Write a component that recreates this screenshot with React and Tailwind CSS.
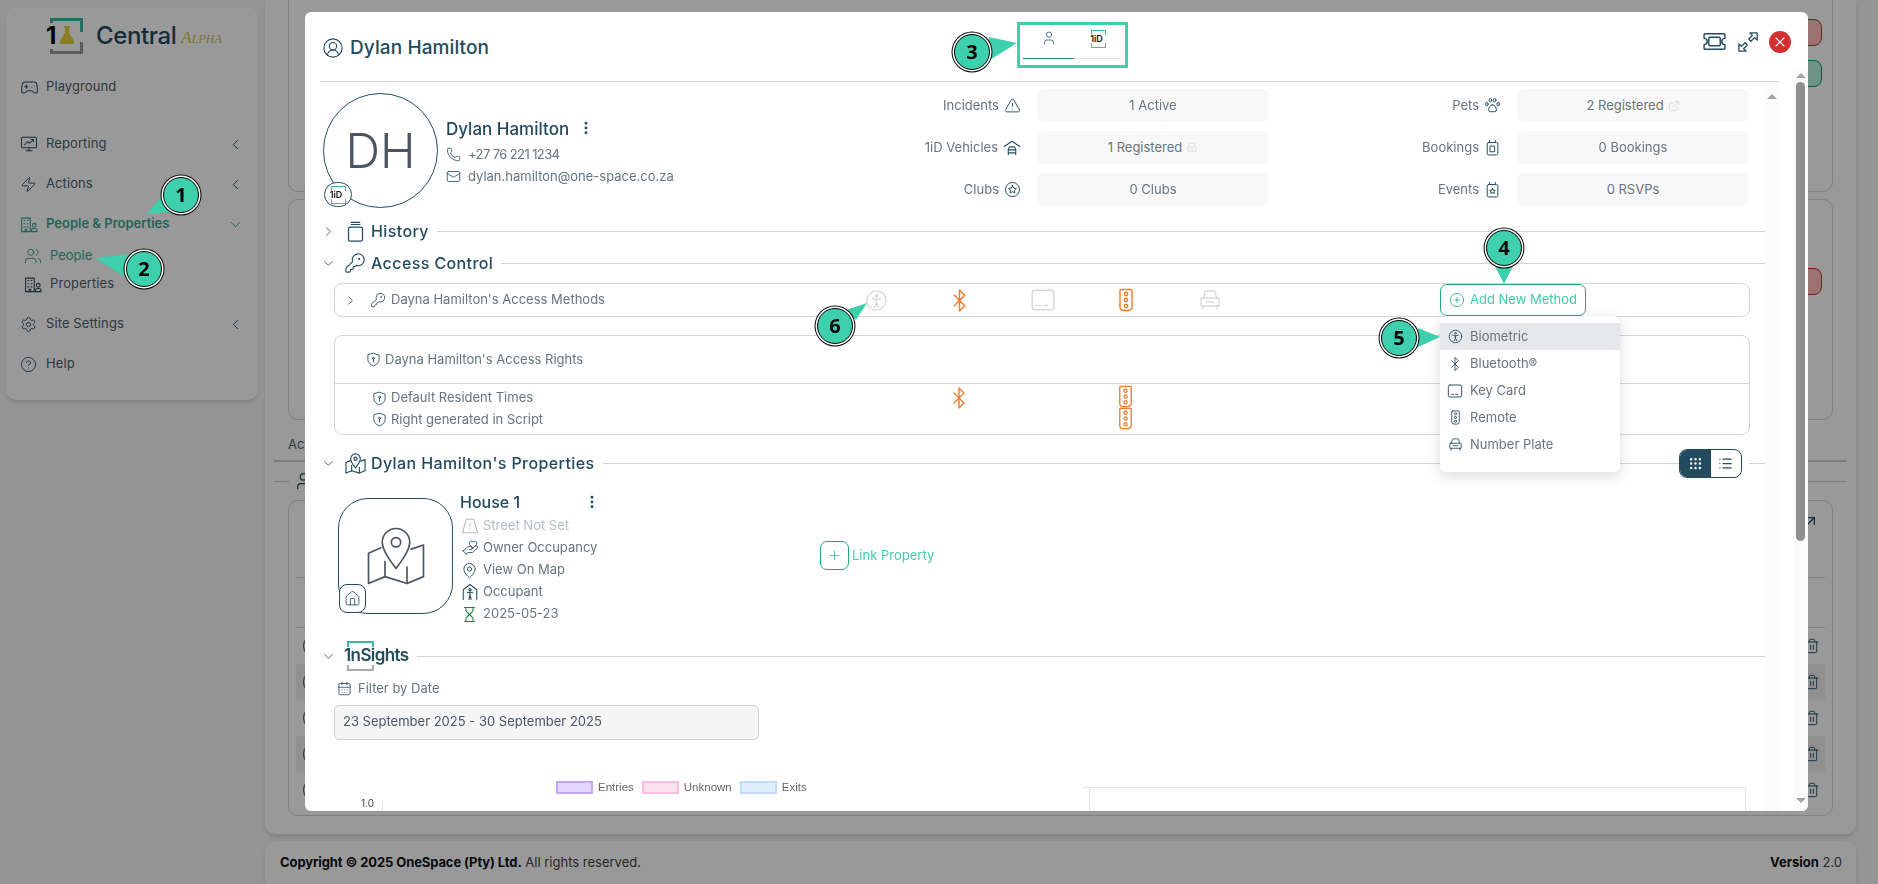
import React from "react";
import {
  Gamepad2, Zap, Users, Settings, CircleHelp, ChevronLeft, ChevronDown, ChevronRight,
  CircleUserRound, User, Phone, Mail, TriangleAlert, ExternalLink,
  KeyRound, Bluetooth, CirclePlus, Plus, MapPin, House, Hourglass, HandHeart,
  CalendarDays, EllipsisVertical, X, Trash2, ArrowUpRight, List, Grip,
} from "lucide-react";

const navy = "text-[#234b5e]";

// little drawn icons the packages don't have
const Svg = ({ size = 18, sw = 1.4, className = "", children }) => (
  <svg width={size} height={size} viewBox="0 0 24 24" fill="none" stroke="currentColor" strokeWidth={sw} strokeLinecap="round" strokeLinejoin="round" className={`shrink-0 ${className}`}>
    {children}
  </svg>
);

const BuildingUser = ({ size, className }) => (
  <Svg size={size} className={className}>
    <path d="M2 21V4h11v17H2z" />
    <path d="M5 7h1M9 7h1M5 11h1M9 11h1M5 15h1M9 15h1M6.500 21v-3h2v3" />
    <circle cx="18" cy="13" r="2.400" />
    <path d="M14.500 21v-1.500a2.500 2.500 0 0 1 2.500-2.500h2a2.500 2.500 0 0 1 2.500 2.500V21z" />
  </Svg>
);
const ChartMonitor = ({ size, className }) => (
  <Svg size={size} className={className}>
    <rect x="2" y="3" width="20" height="14" rx="1.500" />
    <path d="M6 13l4-4 3 2 5-5M15 6h3v3M12 17v4M8 21h8" />
  </Svg>
);
const BioIcon = ({ size, className }) => (
  <Svg size={size} className={className}>
    <circle cx="12" cy="12" r="10" />
    <circle cx="12" cy="7" r="1.300" />
    <path d="M7.500 10l4.500 1 4.500-1M12 11v3.500M12 14.500L10 19M12 14.500l2 4.500" />
  </Svg>
);
const KeyCard = ({ size, className }) => (
  <Svg size={size} className={className}>
    <rect x="2" y="3" width="20" height="18" rx="2.500" />
    <path d="M7 17h3M13 17h3" />
  </Svg>
);
const Remote = ({ size, className }) => (
  <Svg size={size} className={className}>
    <path d="M7 1.500h10a1 1 0 0 1 1 1V19a3.500 3.500 0 0 1-3.500 3.500h-5A3.500 3.500 0 0 1 6 19V2.500a1 1 0 0 1 1-1z" />
    <circle cx="12" cy="6" r="1.700" />
    <circle cx="12" cy="12" r="1.700" />
    <circle cx="12" cy="18" r="1.700" />
  </Svg>
);
const CarIcon = ({ size, sw, className }) => (
  <Svg size={size} sw={sw} className={className}>
    <path d="M5.500 10l1.500-6a1.500 1.500 0 0 1 1.500-1h7a1.500 1.500 0 0 1 1.500 1l1.500 6" />
    <path d="M4 10h16a1 1 0 0 1 1 1v7H3v-7a1 1 0 0 1 1-1z" />
    <path d="M5 18v3M19 18v3M8 14h8" />
  </Svg>
);
const ShieldKey = ({ size = 15, className }) => (
  <Svg size={size} className={className}>
    <path d="M12 2l9 3v7c0 5-4 8.500-9 10-5-1.500-9-5-9-10V5z" />
    <circle cx="12" cy="10" r="1.600" />
    <path d="M12 11.500V16" />
  </Svg>
);
const GarageCar = ({ size, className }) => (
  <Svg size={size} className={className}>
    <path d="M1.500 10L12 3l10.500 7" />
    <path d="M7 21v-7l1.500-3.500h7L17 14v7M7 14.500h10M7 18.500h10" />
  </Svg>
);
const StarCircle = ({ size, className }) => (
  <Svg size={size} className={className}>
    <circle cx="12" cy="12" r="10" />
    <path d="M12 6.500l1.700 3.500 3.800.5-2.800 2.600.7 3.800-3.400-1.800-3.400 1.800.7-3.800-2.800-2.600 3.800-.5z" />
  </Svg>
);
const Jar = ({ size, className, star }) => (
  <Svg size={size} className={className}>
    <rect x="4.500" y="5" width="15" height="17.500" rx="2" />
    <path d="M8 2v3M16 2v3" />
    {star ? <path d="M12 10.500l1.200 2.400 2.600.4-1.900 1.800.5 2.600-2.400-1.300-2.400 1.300.5-2.600-1.900-1.800 2.600-.4z" /> : <rect x="9" y="10" width="6" height="8" />}
  </Svg>
);
const HistoryIcon = ({ size, className }) => (
  <Svg size={size} className={className}>
    <rect x="4" y="7" width="16" height="16" rx="2" />
    <path d="M7 4h10M7 1.500h10" />
  </Svg>
);
const Ticket = ({ size, className }) => (
  <Svg size={size} className={className}>
    <path d="M3 4.500h18a1 1 0 0 1 1 1V9a3 3 0 0 0 0 6v3.500a1 1 0 0 1-1 1H3a1 1 0 0 1-1-1V15a3 3 0 0 0 0-6V5.500a1 1 0 0 1 1-1z" />
    <rect x="6.500" y="8" width="11" height="8" rx="1" />
  </Svg>
);
const ExpandArrows = ({ size, className }) => (
  <Svg size={size} className={className}>
    <path d="M14 2h8v8l-2.800-2.800-4 4-2.400-2.400 4-4z" />
    <path d="M10 22H2v-8l2.800 2.800 4-4 2.400 2.400-4 4z" />
  </Svg>
);
const Street = ({ size, className }) => (
  <Svg size={size} className={className}>
    <path d="M7 3h10l5 18H2z" />
    <path d="M12 8v4M12 16v.5" />
  </Svg>
);
const Occupant = ({ size, className }) => (
  <Svg size={size} className={className}>
    <path d="M3 22V9l9-7 9 7v13" />
    <circle cx="12" cy="9" r="1.500" />
    <path d="M8.500 13l3.500-1 3.500 1M12 12v4M12 16l-1.500 6M12 16l1.500 6" />
  </Svg>
);
const PinMap = ({ size, sw, className }) => (
  <Svg size={size} sw={sw} className={className}>
    <path d="M12 2a5 5 0 0 0-5 5c0 3.500 5 9.500 5 9.500s5-6 5-9.500a5 5 0 0 0-5-5z" />
    <circle cx="12" cy="7" r="1.700" />
    <path d="M6.500 9L2 11v11l6-2.500 8 2.500 6-2.500V8l-4.500 1.500" />
    <path d="M8 14v5.500M16 16v6" />
  </Svg>
);
const Paw = ({ size, className }) => (
  <Svg size={size} className={className}>
    <ellipse cx="9" cy="4.500" rx="1.800" ry="2.500" />
    <ellipse cx="15" cy="4.500" rx="1.800" ry="2.500" />
    <ellipse cx="4" cy="10" rx="1.800" ry="2.400" />
    <ellipse cx="20" cy="10" rx="1.800" ry="2.400" />
    <path d="M12 11c-3 0-5.500 4-5.500 7 0 3 3 3.500 5.500 2.500 2.500 1 5.500.5 5.500-2.500 0-3-2.500-7-5.500-7z" />
  </Svg>
);

const IdBadge = ({ small }) => (
  <span className={`relative flex items-center justify-center ${small ? "w-[15px] h-[18px]" : "w-[17px] h-[18px]"}`}>
    <span className="absolute top-0 inset-x-0 h-[5px] border-t-[1.5px] border-x-[1.5px] border-[#3db8a0]" />
    <span className="absolute bottom-0 inset-x-0 h-[5px] border-b-[1.5px] border-x-[1.5px] border-[#999]" />
    <span className="relative text-[9px] font-semibold text-[#111] -ml-[4px]">1iD</span>
  </span>
);

const NavRow = ({ icon, label, chevron, active, sub, className = "" }) => (
  <div className={`flex items-center h-[24px] ${sub ? "pl-[18px]" : "pl-[14px]"} pr-[14px] ${className}`}>
    <span className={`w-[26px] flex ${active ? "text-[#3ba88e]" : "text-[#2e4f60]"}`}>{icon}</span>
    <span className={`flex-1 text-[13px] ${active ? "text-[#3ba88e]" : "text-[#51606b] tracking-[0.1px]"} ${active && !sub ? "font-semibold" : ""}`}>{label}</span>
    {chevron === "left" && <ChevronLeft size={17} strokeWidth={1.3} className="text-[#2e4f60]" />}
    {chevron === "down" && <ChevronDown size={17} strokeWidth={1.3} className="text-[#3ba88e]" />}
  </div>
);

const Sidebar = () => (
  <div className="w-[252px] h-[393px] mt-[7px] ml-[6px] bg-white rounded-[10px] shadow-md flex flex-col">
    <div className="h-[47px] mt-[5px] pl-[40px] flex items-center">
      <div className="relative w-[37px] h-[36px]">
        <span className="absolute left-[4px] right-0 top-0 h-[14px] border-t-[3px] border-x-[3px] border-[#3db8a0]" />
        <span className="absolute left-[4px] right-0 bottom-0 h-[12px] border-b-[3px] border-x-[3px] border-[#999]" />
        <span className="absolute left-0 top-[5px] bg-white text-[24px] leading-[26px] font-bold text-black">1</span>
        <svg className="absolute left-[14px] top-[8px]" width="14" height="18" viewBox="0 0 14 18">
          <path d="M4 0h6v1.500H9v5l5 9v2.500H0v-2.500l5-9v-5H4z" fill="#e6d23c" />
        </svg>
      </div>
      <span className="ml-[13px] text-[24px] font-medium text-[#234b5e] tracking-[-0.4px]">Central</span>
      <span className="ml-[5px] mt-[4px] font-['Liberation_Serif'] italic text-[17px] text-[#ccc54a]">A<span className="text-[12px]">LPHA</span></span>
    </div>
    <NavRow className="mt-[16px]" icon={<Gamepad2 size={19} strokeWidth={1.3} />} label="Playground" />
    <NavRow className="mt-[33px]" icon={<ChartMonitor size={18} />} label="Reporting" chevron="left" />
    <NavRow className="mt-[16px]" icon={<Zap size={17} strokeWidth={1.3} />} label="Actions" chevron="left" />
    <NavRow className="mt-[16px]" active icon={<BuildingUser size={19} />} label="People & Properties" chevron="down" />
    <NavRow className="mt-[8px]" sub active icon={<Users size={18} strokeWidth={1.3} />} label="People" />
    <NavRow className="mt-[4px]" sub icon={<BuildingUser size={19} />} label="Properties" />
    <NavRow className="mt-[16px]" icon={<Settings size={17} strokeWidth={1.3} />} label="Site Settings" chevron="left" />
    <NavRow className="mt-[16px]" icon={<CircleHelp size={17} strokeWidth={1.3} />} label="Help" />
  </div>
);

const PageBehind = () => (
  <div className="w-[1591px] ml-[7px] flex flex-col">
    <div className="h-[834px] bg-white rounded-b-[10px] shadow-md flex flex-col px-[9px]">
      <div className="px-[14px] flex flex-col gap-[7px]">
        <div className="h-[192px] border-x border-b border-[#d9d9d9] rounded-b-[10px] flex justify-end pr-[10px] pt-[19px] relative">
          <div className="flex flex-col gap-[14px]">
            <div className="w-[60px] h-[27px] bg-[#ffbebe] border border-[#c0392b] rounded-[8px]" />
            <div className="w-[60px] h-[27px] bg-[#b9f2df] border border-[#0d9668] rounded-[8px]" />
          </div>
        </div>
        <div className="h-[221px] border border-[#d9d9d9] rounded-[10px] flex justify-end pr-[10px] pt-[68px]">
          <div className="w-[60px] h-[27px] bg-[#ffbebe] border border-[#c0392b] rounded-[8px]" />
        </div>
      </div>
      <div className="h-[42px] border-b-2 border-[#cfcfcf] flex items-end pb-[6px] pl-[14px] text-[13px] text-[#51606b]">Active</div>
      <div className="h-[38px] flex items-center">
        <span className="w-[15px] h-px bg-[#cfcfcf]" />
        <Users size={20} strokeWidth={1.5} className={`ml-[7px] ${navy}`} />
        <span className="flex-1 h-px bg-[#cfcfcf]" />
      </div>
      <div className="mx-[14px] h-[316px] border border-[#d9d9d9] rounded-[10px] px-[7px] flex flex-col">
        <div className="h-[77px] border-b border-[#d9d9d9] flex justify-end items-start pt-[12px] pr-[6px] text-[#234b5e]"><ArrowUpRight size={16} /></div>
        <div className="h-[50px] border-b border-[#d9d9d9]" />
        {[0, 1, 2, 3, 4].map((i) => (
          <div key={i} className={`h-[36px] flex items-center justify-between pl-[7px] pr-[5px] ${i % 2 ? "bg-[#f1f1f1]" : ""}`}>
            <span className="w-[26px] h-[26px] rounded-full border border-[#234b5e]" />
            <Trash2 size={16} strokeWidth={1.4} className="text-[#234b5e]" />
          </div>
        ))}
      </div>
    </div>
    <div className="h-[43px] mt-[7px] bg-white rounded-t-[10px] shadow-md flex items-center justify-between pl-[15px] pr-[14px] text-[13px]">
      <span className="text-[#444]"><b className="font-bold text-[#111] tracking-[-0.1px]">Copyright © 2025 OneSpace (Pty) Ltd.</b> All rights reserved.</span>
      <span className="text-[#444]"><b className="font-bold text-[#111]">Version</b> 2.0</span>
    </div>
  </div>
);

const Stat = ({ label, icon, value, valueIcon, labelW }) => (
  <div className="flex items-center">
    <div className={`flex items-center justify-end gap-[5px] ${labelW} text-[13px] text-[#69747c]`}>
      <span>{label}</span>
      <span className={navy}>{icon}</span>
    </div>
    <div className="ml-[16px] w-[232px] h-[33px] rounded-[6px] bg-[#f8f8f8] flex items-center justify-center gap-[4px] text-[13px] text-[#69747c]">
      {value}
      {valueIcon}
    </div>
  </div>
);

const SectionHead = ({ open = true, icon, title, className = "", right }) => (
  <div className={`flex items-center h-[24px] ${className}`}>
    <span className="w-[20px] flex justify-center text-[#234b5e] ml-[-2px] mr-[2px]">
      {open ? <ChevronDown size={15} strokeWidth={1.3} /> : <ChevronRight size={15} strokeWidth={1.3} />}
    </span>
    <span className={`w-[30px] flex justify-center ${navy}`}>{icon}</span>
    <span className={`ml-[1px] text-[16px] font-medium tracking-[0.4px] ${navy}`}>{title}</span>
    <span className="flex-1 h-px bg-[#d4d4d4] ml-[8px]" />
    {right}
    {right && <span className="w-[16px] h-px bg-[#d4d4d4] ml-[7px]" />}
  </div>
);

const MethodIcons = () => (
  <>
    <span className="w-[83px] flex justify-center"><BioIcon size={23} className="text-[#d9d9d9]" /></span>
    <span className="w-[83px] flex justify-center"><Bluetooth size={25} strokeWidth={1.4} className="text-[#f47b2a]" /></span>
    <span className="w-[83px] flex justify-center"><KeyCard size={26} className="text-[#d9d9d9]" /></span>
    <span className="w-[84px] flex justify-center"><Remote size={24} className="text-[#f47b2a]" /></span>
    <span className="w-[83px] flex justify-center"><CarIcon size={24} sw={1.3} className="text-[#d9d9d9]" /></span>
  </>
);

const MethodMenu = () => {
  const items = [
    [<BioIcon size={15} />, "Biometric"],
    [<Bluetooth size={16} strokeWidth={1.3} />, "Bluetooth®"],
    [<KeyCard size={16} />, "Key Card"],
    [<Remote size={15} />, "Remote"],
    [<CarIcon size={15} sw={1.4} />, "Number Plate"],
  ];
  return (
    <div className="absolute left-[1120px] top-[234px] z-10 w-[180px] h-[156px] pt-[7px] bg-white rounded-[6px] shadow-[0_4px_14px_rgba(0,0,0,0.15)]">
      {items.map(([icon, label], i) => (
        <div key={label} className={`h-[27px] flex items-center pl-[7px] gap-[7px] text-[13px] text-[#69747c] ${i === 0 ? "bg-[#e5e7eb]" : ""}`}>
          <span className={`w-[16px] flex justify-center ${navy}`}>{icon}</span>
          {label}
        </div>
      ))}
    </div>
  );
};

const PropLine = ({ icon, children, className = "text-[#69747c]" }) => (
  <div className={`flex items-center h-[22px] gap-[4px] text-[13px] ${className}`}>
    <span className="w-[19px] flex justify-center">{icon}</span>
    {children}
  </div>
);

const Legend = ({ box, border, label }) => (
  <div className="flex items-center gap-[5px] font-['Liberation_Sans'] text-[11.5px] text-[#666]">
    <span className={`w-[37px] h-[13px] border-2 ${box} ${border}`} />
    {label}
  </div>
);

const ModalBody = () => (
  <div className="relative flex-1 w-[1445px] min-h-0 overflow-hidden">
    {/* profile + stats */}
    <div className="flex h-[136px]">
      <div className="w-[560px] shrink-0 flex pl-[3px] pt-[11px]">
        <div className="relative w-[115px] h-[115px] rounded-full border border-[#234b5e] flex items-center justify-center text-[48px] font-light text-[#4b5563]">
          DH
          <span className="absolute left-0 bottom-0 w-[28px] h-[25px] rounded-full border border-[#234b5e] bg-white flex items-center justify-center"><IdBadge small /></span>
        </div>
        <div className="ml-[8px] pt-[24px]">
          <div className="flex items-center">
            <span className={`text-[17px] font-medium ${navy}`}>Dylan Hamilton</span>
            <EllipsisVertical size={16} strokeWidth={2.4} className={`ml-[9px] -mt-[3px] ${navy}`} />
          </div>
          <div className="flex items-center gap-[7px] mt-[1px] h-[22px] text-[13px] text-[#69747c]"><Phone size={15} strokeWidth={1.3} className={navy} /><span className="tracking-[-0.6px]">+27 76 221 1234</span></div>
          <div className="flex items-center gap-[7px] h-[22px] text-[13px] text-[#69747c]"><Mail size={15} strokeWidth={1.3} className={navy} />dylan.hamilton@one-space.co.za</div>
        </div>
      </div>
      <div className="grid grid-cols-[389px_480px] gap-y-[9px] pt-[7px] h-fit">
        <Stat labelW="w-[141px]" label="Incidents" icon={<TriangleAlert size={17} strokeWidth={1.3} />} value="1 Active" />
        <Stat labelW="w-[232px]" label="Pets" icon={<Paw size={17} />} value="2 Registered" valueIcon={<ExternalLink size={12} className="text-[#ddd]" />} />
        <Stat labelW="w-[141px]" label="1iD Vehicles" icon={<GarageCar size={18} />} value="1 Registered" valueIcon={<CarIcon size={12} className="text-[#ddd]" />} />
        <Stat labelW="w-[232px]" label="Bookings" icon={<Jar size={17} />} value="0 Bookings" />
        <Stat labelW="w-[141px]" label="Clubs" icon={<StarCircle size={17} />} value="0 Clubs" />
        <Stat labelW="w-[232px]" label="Events" icon={<Jar size={17} star />} value="0 RSVPs" />
      </div>
    </div>

    <SectionHead className="mt-[1px]" open={false} icon={<HistoryIcon size={21} />} title="History" />
    <SectionHead className="mt-[8px]" icon={<KeyRound size={22} strokeWidth={1.2} />} title="Access Control" />

    {/* access methods */}
    <div className="relative mt-[8px] ml-[14px] w-[1416px] h-[34px] border border-[#d4d4d4] rounded-[8px] flex items-center pl-[8px]">
      <ChevronRight size={15} strokeWidth={1.3} className="text-[#234b5e]" />
      <KeyRound size={16} strokeWidth={1.3} className="ml-[12px] text-[#234b5e]" />
      <span className="ml-[5px] w-[444px] text-[13px] text-[#69747c]">Dayna Hamilton's Access Methods</span>
      <MethodIcons />
      <div className="ml-[189px] w-[146px] h-[32px] border border-[#22a584] rounded-[7px] flex items-center justify-center gap-[5px] text-[13px] text-[#3ecfad]">
        <CirclePlus size={16} strokeWidth={1.2} className="text-[#22a584]" />
        Add New Method
      </div>
    </div>
    <MethodMenu />

    {/* access rights */}
    <div className="mt-[18px] ml-[14px] w-[1416px] h-[100px] border border-[#d4d4d4] rounded-[8px] flex flex-col">
      <div className="h-[48px] flex items-center pl-[31px] gap-[4px] text-[13px] text-[#69747c] border-b border-[#d4d4d4]">
        <ShieldKey className={navy} />
        Dayna Hamilton's Access Rights
      </div>
      <div className="flex-1 flex">
        <div className="w-[582px] pl-[37px] pt-[3px] flex flex-col">
          <div className="h-[22px] flex items-center gap-[4px] text-[13px] text-[#69747c]"><ShieldKey className={navy} />Default Resident Times</div>
          <div className="h-[21px] flex items-center gap-[4px] text-[13px] text-[#69747c]"><ShieldKey className={navy} />Right generated in Script</div>
        </div>
        <div className="w-[83px] flex justify-center pt-[2px]"><Bluetooth size={24} strokeWidth={1.4} className="text-[#f47b2a]" /></div>
        <div className="w-[83px]" />
        <div className="w-[84px] flex flex-col items-center pt-[1px] -space-y-[1px]">
          <Remote size={23} className="text-[#f47b2a]" />
          <Remote size={23} className="text-[#f47b2a]" />
        </div>
      </div>
    </div>

    <SectionHead
      className="mt-[16px]"
      icon={<PinMap size={23} sw={1.2} />}
      title="Dylan Hamilton's Properties"
      right={
        <div className="flex w-[63px] h-[29px] rounded-[8px] border border-[#234b5e] overflow-hidden">
          <span className="flex-1 bg-[#234b5e] flex items-center justify-center text-white"><Grip size={15} /></span>
          <span className={`flex-1 flex items-center justify-center ${navy}`}><List size={15} /></span>
        </div>
      }
    />

    {/* property card */}
    <div className="flex mt-[23px] ml-[18px]">
      <div className="relative w-[115px] h-[116px] rounded-[30px] border border-[#234b5e] flex items-center justify-center text-[#4b5563]">
        <PinMap size={66} sw={0.6} />
        <span className={`absolute left-0 bottom-0 w-[27px] h-[29px] rounded-[8px] border border-[#234b5e] bg-white flex items-center justify-center ${navy}`}><House size={17} strokeWidth={1.2} /></span>
      </div>
      <div className="ml-[7px] -mt-[9px] w-[360px]">
        <div className="flex items-center w-[140px] justify-between h-[26px]">
          <span className={`text-[16px] font-medium ${navy}`}>House 1</span>
          <EllipsisVertical size={16} strokeWidth={2.4} className={navy} />
        </div>
        <PropLine className="text-[#b6bcc2]" icon={<Street size={18} className="text-[#b6bcc2]" />}>Street Not Set</PropLine>
        <PropLine icon={<HandHeart size={18} strokeWidth={1.2} className={navy} />}>Owner Occupancy</PropLine>
        <PropLine icon={<MapPin size={17} strokeWidth={1.3} className={navy} />}>View On Map</PropLine>
        <PropLine icon={<Occupant size={18} className={navy} />}>Occupant</PropLine>
        <PropLine icon={<Hourglass size={17} strokeWidth={1.5} className="text-[#15803d]" />}>2025-05-23</PropLine>
      </div>
      <div className="mt-[43px] flex items-start gap-[3px] text-[13px] text-[#3ecfad] h-[29px]">
        <span className="w-[29px] h-[29px] border border-[#22a584] rounded-[7px] flex items-center justify-center"><Plus size={15} strokeWidth={1.1} className="text-[#22a584]" /></span>
        <span className="self-center">Link Property</span>
      </div>
    </div>

    {/* insights */}
    <div className="flex items-center h-[30px] mt-[16px]">
      <span className="w-[20px] flex justify-center text-[#234b5e] ml-[-2px] mr-[6px]"><ChevronDown size={15} strokeWidth={1.3} /></span>
      <span className="relative w-[66px] h-[30px] flex items-center">
        <span className="absolute left-[3px] top-0 w-[27px] h-[6px] border-t-2 border-x-2 border-[#3db8a0]" />
        <span className="absolute left-[3px] bottom-0 w-[27px] h-[6px] border-b-2 border-x-2 border-[#aaa]" />
        <span className={`relative text-[17px] font-semibold tracking-[-0.6px] ${navy}`}>1nSights</span>
      </span>
      <span className="flex-1 h-px bg-[#d4d4d4] ml-[7px]" />
    </div>
    <div className="mt-[8px] ml-[17px] flex items-center gap-[6px] text-[13px] text-[#69747c]">
      <CalendarDays size={15} strokeWidth={1.3} className={navy} />
      Filter by Date
    </div>
    <div className="mt-[6px] ml-[14px] w-[425px] h-[35px] bg-[#f5f5f5] border border-[#cfcfcf] rounded-[5px] flex items-center pl-[8px] text-[13px] text-[#4b5563]">
      23 September 2025 - 30 September 2025
    </div>

    {/* chart, cut by the modal */}
    <div className="flex mt-[39px]">
      <div className="w-[762px]">
        <div className="flex gap-[8px] ml-[236px]">
          <Legend box="bg-[#e3d5fb]" border="border-[#c4a8f7]" label="Entries" />
          <Legend box="bg-[#fde0ef]" border="border-[#fbbfdc]" label="Unknown" />
          <Legend box="bg-[#e0edfd]" border="border-[#bfdbfe]" label="Exits" />
        </div>
        <div className="flex items-start ml-[41px] mt-[1px]">
          <span className="text-[10px] text-[#444] leading-[12px]">1.0</span>
          <span className="ml-[8px] mt-[6px] w-px h-[20px] bg-[#e5e5e5]" />
        </div>
      </div>
      <span className="w-[7px] h-px mt-[8px] bg-[#e5e5e5]" />
      <div className="w-[657px] h-[40px] mt-[8px] border-t border-x border-[#e5e5e5]" />
    </div>
  </div>
);

const Modal = () => (
  <div className="fixed left-[305px] top-[12px] w-[1503px] h-[799px] bg-white rounded-[6px] flex overflow-hidden">
    <div className="w-[1459px] ml-[15px] flex flex-col">
      <div className="relative h-[70px] flex items-start border-b border-[#d4d4d4] shrink-0">
        <div className="w-[703px] flex items-center mt-[22px] gap-[6px] pl-[2px]">
          <CircleUserRound size={22} strokeWidth={1.2} className={navy} />
          <span className={`text-[19px] font-medium tracking-[0.1px] ${navy}`}>Dylan Hamilton</span>
        </div>
        <div className="flex mt-[7px]">
          <div className="w-[51px] h-[40px] border-b border-[#2a8a74] flex justify-center pt-[11px] text-[#234b5e]"><User size={16} strokeWidth={1.1} /></div>
          <div className="w-[49px] h-[40px] border-b border-[#e5e5e5] flex justify-center pt-[11px]"><IdBadge small /></div>
        </div>
        <div className="ml-auto -mr-[12px] flex items-center gap-[10px] mt-[17px] text-[#234b5e]">
          <Ticket size={25} />
          <ExpandArrows size={22} />
          <span className="w-[22px] h-[22px] rounded-full bg-[#d32f2f] flex items-center justify-center text-white"><X size={16} strokeWidth={1.6} /></span>
        </div>
      </div>
      <div className="flex-1 min-h-0 flex">
        <ModalBody />
        <div className="w-[14px] bg-[#fbfbfb] flex justify-center pt-[12px]">
          <span className="w-0 h-0 border-x-[5px] border-x-transparent border-b-[5px] border-b-[#a3a3a3]" />
        </div>
      </div>
    </div>
    <div className="ml-[14px] w-[15px] mt-[55px] bg-[#fbfbfb] flex flex-col items-center pt-[6px]">
      <span className="w-0 h-0 border-x-[5px] border-x-transparent border-b-[5px] border-b-[#a3a3a3]" />
      <span className="w-[9px] h-[459px] mt-[4px] rounded-full bg-[#8f8f8f]" />
      <span className="mt-auto mb-[8px] w-0 h-0 border-x-[5px] border-x-transparent border-t-[5px] border-t-[#a3a3a3]" />
    </div>
  </div>
);

const Badge = ({ n, className }) => (
  <span className={`absolute z-30 w-[36px] h-[36px] rounded-full bg-[#3ecfad] border border-black shadow-[0_0_0_1.5px_#fff,0_0_0_2.5px_#000] flex items-center justify-center text-[20px] font-bold text-black font-['Open_Sans'] ${className}`}>
    {n}
  </span>
);

// tour callouts that sit over everything
const Callouts = () => (
  <>
    <svg className="absolute inset-0 z-20 pointer-events-none" width="1878" height="884">
      <g fill="#3ecfad">
        <polygon points="161,197 172,212 147,214" />
        <polygon points="130,254 125,277 95,258" />
        <polygon points="989,37 1017,43 985,63" />
        <polygon points="1495,266 1513,266 1504,284" />
        <polygon points="1418,328 1440,337 1416,348" />
        <polygon points="846,310 856,320 867,303" />
      </g>
    </svg>
    <div className="absolute z-20 left-[1017px] top-[22px] w-[111px] h-[46px] border-[3px] border-[#3ecfad]" />
    <Badge n="1" className="left-[163px] top-[177px]" />
    <Badge n="2" className="left-[126px] top-[251px]" />
    <Badge n="3" className="left-[954px] top-[34px]" />
    <Badge n="4" className="left-[1486px] top-[230px]" />
    <Badge n="5" className="left-[1381px] top-[320px]" />
    <Badge n="6" className="left-[817px] top-[308px]" />
  </>
);

const App = () => (
  <div className="relative w-[1878px] h-[884px] overflow-hidden bg-[#f8f8f8] font-['Inter',sans-serif] flex">
    <Sidebar />
    <PageBehind />
    <div className="fixed inset-0 bg-black/40" />
    <Modal />
    <Callouts />
  </div>
);

export default App;
